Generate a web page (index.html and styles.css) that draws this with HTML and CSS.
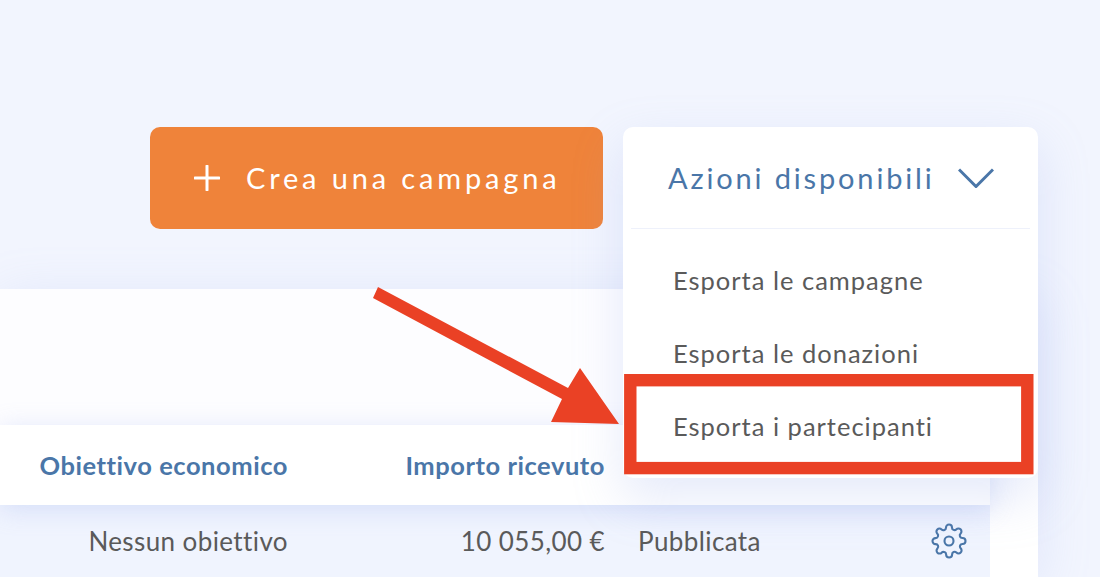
FILE: index.html
```html
<!DOCTYPE html>
<html lang="it">
  <head>
    <meta charset="UTF-8" />
    <meta name="viewport" content="width=device-width, initial-scale=1.0" />
    <title>Campagne</title>
    <link rel="stylesheet" href="styles.css">
  </head>
  <body>
    <div class="actions">
      <button class="create-btn">
        <svg class="plus" viewBox="0 0 26 26" width="26" height="26">
          <path d="M13 1v24M1 13h24" />
        </svg>
        <span class="create-label">Crea una campagna</span>
      </button>
      <div class="dropdown">
        <div class="dropdown-head">
          <span>Azioni disponibili</span>
          <svg class="chevron" viewBox="0 0 36 20" width="36" height="20">
            <path d="M1 1.5l17 17 17-17" />
          </svg>
        </div>
        <ul class="dropdown-list">
          <li>Esporta le campagne</li>
          <li>Esporta le donazioni</li>
          <li>Esporta i partecipanti</li>
        </ul>
      </div>
    </div>

    <div class="card">
      <div class="card-top"></div>
      <div class="table-row table-head">
        <div class="goal">Obiettivo economico</div>
        <div class="amount">Importo ricevuto</div>
      </div>
      <div class="table-row table-body">
        <div class="goal">Nessun obiettivo</div>
        <div class="amount">10 055,00 €</div>
        <div class="status">Pubblicata</div>
        <svg class="gear" viewBox="0 0 24 24" width="36" height="36">
          <circle cx="12" cy="12" r="3" />
          <path d="M19.4 15a1.65 1.65 0 0 0 .33 1.82l.06.06a2 2 0 0 1 0 2.83 2 2 0 0 1-2.83 0l-.06-.06a1.65 1.65 0 0 0-1.82-.33 1.65 1.65 0 0 0-1 1.51V21a2 2 0 0 1-2 2 2 2 0 0 1-2-2v-.09A1.65 1.65 0 0 0 9 19.4a1.65 1.65 0 0 0-1.82.33l-.06.06a2 2 0 0 1-2.83 0 2 2 0 0 1 0-2.83l.06-.06a1.65 1.65 0 0 0 .33-1.82 1.65 1.65 0 0 0-1.51-1H3a2 2 0 0 1-2-2 2 2 0 0 1 2-2h.09A1.65 1.65 0 0 0 4.6 9a1.65 1.65 0 0 0-.33-1.82l-.06-.06a2 2 0 0 1 0-2.83 2 2 0 0 1 2.83 0l.06.06a1.65 1.65 0 0 0 1.82.33H9a1.65 1.65 0 0 0 1-1.51V3a2 2 0 0 1 2-2 2 2 0 0 1 2 2v.09a1.65 1.65 0 0 0 1 1.51 1.65 1.65 0 0 0 1.82-.33l.06-.06a2 2 0 0 1 2.83 0 2 2 0 0 1 0 2.83l-.06.06a1.65 1.65 0 0 0-.33 1.82V9a1.65 1.65 0 0 0 1.51 1H21a2 2 0 0 1 2 2 2 2 0 0 1-2 2h-.09a1.65 1.65 0 0 0-1.51 1z" />
        </svg>
      </div>
    </div>

    <!-- annotation drawn over the screenshot -->
    <svg class="annotation" viewBox="0 0 1100 577" width="1100" height="577">
      <path class="arrow" d="M378 287L373 298L562 399L551 422L619 424L580 368L568 388Z" />
      <rect class="highlight" x="630.3" y="380.2" width="397" height="87.9" />
    </svg>
  </body>
</html>
```

FILE: styles.css
```css
body {
  margin: 0;
  height: 577px;
  overflow: hidden;
  position: relative;
  background: #f2f5fe;
  font-family: Lato, "Open Sans", sans-serif;
  color: #5a5a5a;
}
.actions {
  display: flex;
  align-items: flex-start;
  gap: 20px;
  height: 102px;
  padding: 127px 0 0 150px;
}
.create-btn {
  display: flex;
  align-items: center;
  flex-shrink: 0;
  gap: 26px;
  width: 453px;
  height: 102px;
  padding: 0 0 0 44px;
  background: #ef833a;
  color: #fff;
  border: none;
  border-radius: 10px;
  font-family: inherit;
  font-size: 29px;
  letter-spacing: 3.85px;
}
.create-label {
  margin-top: -2px;
}
.plus path {
  fill: none;
  stroke: #fff;
  stroke-width: 3;
  stroke-linecap: round;
}
.dropdown {
  position: relative;
  z-index: 2;
  flex-shrink: 0;
  width: 415px;
  height: 351px;
  background: #fff;
  border-radius: 10px;
  box-shadow: 0 20px 50px rgba(150, 170, 235, 0.25);
}
.dropdown-head {
  display: flex;
  align-items: center;
  justify-content: space-between;
  height: 101px;
  margin: 0 8px;
  padding: 0 36px 0 37px;
  border-bottom: 1px solid #eef1fb;
  color: #4a76a8;
  font-size: 29px;
  letter-spacing: 2.85px;
}
.chevron path {
  fill: none;
  stroke: #4a76a8;
  stroke-width: 3;
}
.dropdown-list {
  list-style: none;
  margin: 0;
  padding: 15px 0 0 50px;
  font-size: 25.5px;
  letter-spacing: 1px;
}
.dropdown-list li {
  height: 73px;
  line-height: 73px;
}
.card {
  width: 1038px;
  height: 288px;
  margin-top: 60px;
  background: #fff;
  box-shadow: 0 10px 50px rgba(150, 170, 235, 0.2);
}
.card-top {
  height: 136px;
  background: #fdfdff;
}
.table-row {
  display: grid;
  grid-template-columns: 288px 317px 1fr auto;
  align-items: center;
  width: 990px;
  box-sizing: border-box;
  padding-right: 23px;
  font-size: 26px;
  letter-spacing: 0.4px;
}
.goal, .amount {
  text-align: right;
}
.table-head {
  position: relative;
  height: 80px;
  background: #fff;
  color: #4a76a8;
  font-weight: 700;
  font-size: 25.5px;
  letter-spacing: 0.55px;
  box-shadow: 0 4px 24px rgba(150, 170, 235, 0.3);
}
.table-body {
  height: 72px;
  background: #f0f4fe;
}
.status {
  padding-left: 33px;
}
.gear {
  fill: none;
  stroke: #4a76a8;
  stroke-width: 1.4;
}
.annotation {
  position: absolute;
  left: 0;
  top: 0;
  z-index: 3;
}
.arrow {
  fill: #ea4125;
}
.highlight {
  fill: none;
  stroke: #ea4125;
  stroke-width: 12.4;
}
```
